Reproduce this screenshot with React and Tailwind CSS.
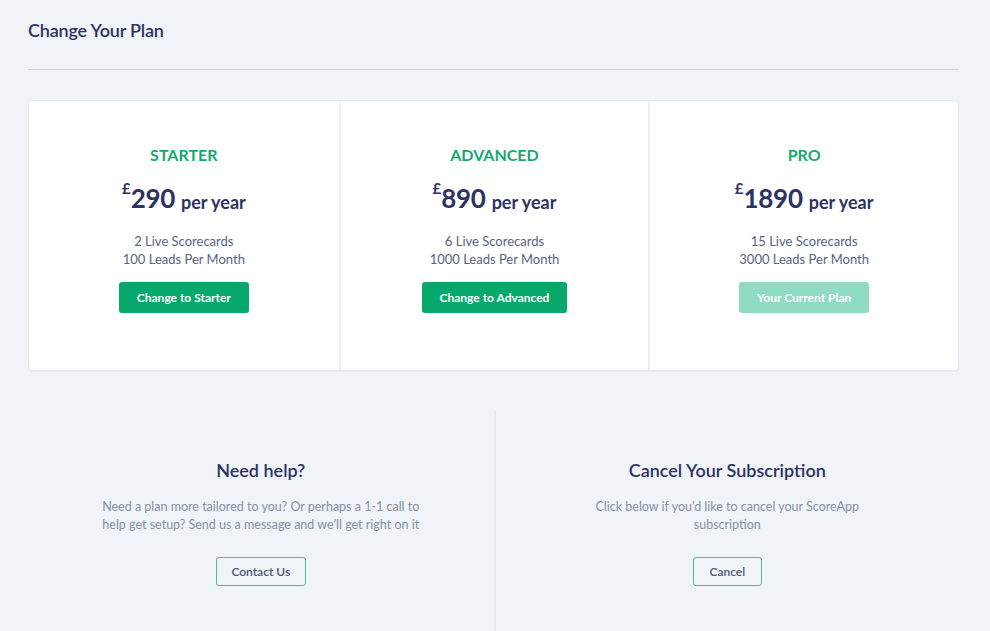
import React from "react";

const plans = [
  { name: "STARTER", price: "290", cards: "2 Live Scorecards", leads: "100 Leads Per Month", btn: "Change to Starter", current: false },
  { name: "ADVANCED", price: "890", cards: "6 Live Scorecards", leads: "1000 Leads Per Month", btn: "Change to Advanced", current: false },
  { name: "PRO", price: "1890", cards: "15 Live Scorecards", leads: "3000 Leads Per Month", btn: "Your Current Plan", current: true },
];

export default function App() {
  return (
    <div
      className="min-h-[631px] bg-[#f0f3f8] pl-[28px] pr-[31px] pt-[18px] overflow-hidden"
      style={{ fontFamily: "Lato, 'Open Sans', sans-serif" }}
    >
      <h1 className="text-[18px] leading-[24px] font-semibold text-[#2e3262] tracking-[-0.2px]">Change Your Plan</h1>
      <div className="mt-[27px] h-px bg-[#cfd3dc]" />

      <div className="mt-[30px] grid grid-cols-3 bg-white border border-[#e3e7ee] rounded-[4px] shadow-[0_1px_1px_rgba(0,0,0,0.04)]">
        {plans.map((p, i) => (
          <div
            key={p.name}
            className={
              "flex flex-col items-center pt-[44px] pb-[57px] " +
              (i > 0 ? "border-l-2 border-[#eef0f5]" : "")
            }
          >
            <div className="text-[16px] leading-[20px] font-bold text-[#17a871]">{p.name}</div>
            <div className="mt-[17px] flex items-start text-[#2e3262] font-bold h-[32px]">
              <span className="text-[15px] leading-[16px] mt-[-2px]">£</span>
              <span className="text-[26px] leading-[32px] tracking-[-0.3px]">{p.price}</span>
              <span className="text-[18px] leading-[20px] mt-[10px] ml-[6px]">per year</span>
            </div>
            <div className="mt-[18px] text-[13px] leading-[18px] text-[#56647f] text-center">
              <div>{p.cards}</div>
              <div>{p.leads}</div>
            </div>
            <button
              className={
                "mt-[14px] h-[31px] px-[18px] rounded-[3px] text-white text-[12px] font-bold " +
                (p.current ? "bg-[#8fdbc3]" : "bg-[#06a86c]")
              }
            >
              {p.btn}
            </button>
          </div>
        ))}
      </div>

      <div className="mt-[40px] grid grid-cols-2 min-h-[230px]">
        <div className="flex flex-col items-center pt-[47px]">
          <h2 className="text-[18px] leading-[24px] font-semibold text-[#2e3262]">Need help?</h2>
          <p className="mt-[16px] text-[12.5px] leading-[18px] text-[#8591a6] text-center whitespace-nowrap">
            Need a plan more tailored to you? Or perhaps a 1-1 call to
            <br />
            help get setup? Send us a message and we’ll get right on it
          </p>
          <button className="mt-[23px] h-[29px] w-[90px] rounded-[3px] border-[1.5px] border-[#3fc391] text-[12px] text-[#4b5975] font-semibold">
            Contact Us
          </button>
        </div>
        <div className="flex flex-col items-center pt-[47px] border-l-2 border-[#e6e9ef]">
          <h2 className="text-[18px] leading-[24px] font-semibold text-[#2e3262]">Cancel Your Subscription</h2>
          <p className="mt-[16px] text-[12.5px] leading-[18px] text-[#8591a6] text-center whitespace-nowrap">
            Click below if you’d like to cancel your ScoreApp
            <br />
            subscription
          </p>
          <button className="mt-[23px] h-[29px] w-[69px] rounded-[3px] border-[1.5px] border-[#3fc391] text-[12px] text-[#4b5975] font-semibold">
            Cancel
          </button>
        </div>
      </div>
    </div>
  );
}
